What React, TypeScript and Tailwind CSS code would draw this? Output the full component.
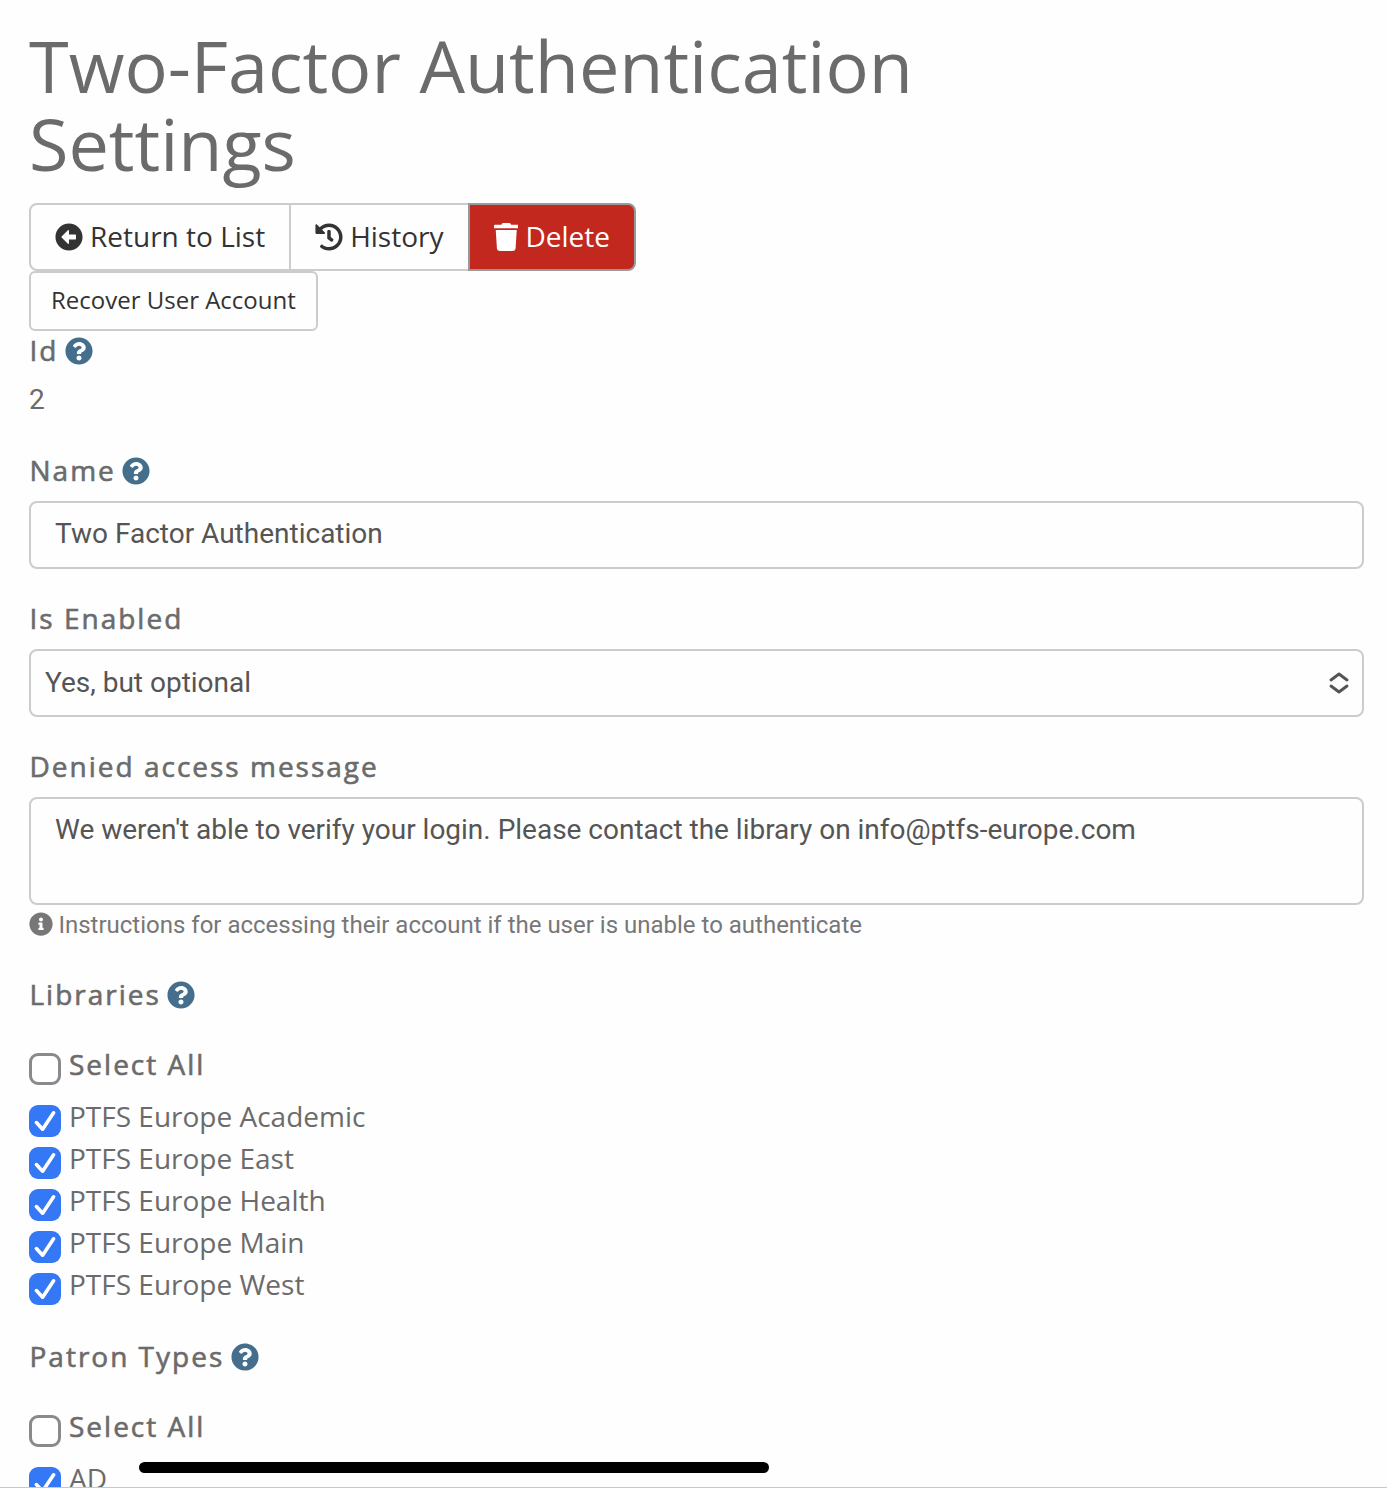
import type { ReactNode } from "react";
import {
  FaArrowAltCircleLeft,
  FaHistory,
  FaInfoCircle,
  FaQuestionCircle,
  FaTrash,
} from "react-icons/fa";

const libraries = [
  "PTFS Europe Academic",
  "PTFS Europe East",
  "PTFS Europe Health",
  "PTFS Europe Main",
  "PTFS Europe West",
];

function Label({ children, help = false, className = "" }: { children: ReactNode; help?: boolean; className?: string }) {
  return (
    <div className={`flex h-[38px] items-center pl-[0.5px] leading-[38px] ${className}`}>
      <span className="tracking-[2px] [-webkit-text-stroke:0.6px_#6b6b6b]">{children}</span>
      {help && <FaQuestionCircle className="mt-[1.2px] ml-[6.4px] size-7 text-[#446e8c]" />}
    </div>
  );
}

function Check({ label, checked = false, strong = false }: { label: string; checked?: boolean; strong?: boolean }) {
  return (
    <div className="flex h-[42px] items-start gap-2">
      {checked ? (
        <span className="mt-2 flex size-8 shrink-0 items-center justify-center rounded-[9px] bg-[#3578f6]">
          <svg viewBox="0 0 32 32" className="size-8" fill="none" stroke="#fff" strokeWidth="3.6" strokeLinecap="round" strokeLinejoin="round">
            <path d="M7.4 17.6 13.6 24.2 24.6 7.8" />
          </svg>
        </span>
      ) : (
        <span className="mt-2 size-8 shrink-0 rounded-[9px] border-3 border-[#8a8a8e] bg-white" />
      )}
      <span className={strong ? "leading-[38px] tracking-[2px] [-webkit-text-stroke:0.6px_#6b6b6b]" : "leading-[38px]"}>
        {label}
      </span>
    </div>
  );
}

export default function App() {
  return (
    <div className="relative flex h-[1488px] flex-col overflow-hidden bg-[#fefefe] pr-[23px] pl-[29px] font-['Open_Sans',sans-serif] text-[28px] text-[#6b6b6b] *:shrink-0">
      <h1 className="w-[1000px] pt-[26px] text-[72px] leading-[78px] tracking-[-0.02px]">Two-Factor Authentication Settings</h1>

      <div className="mt-[21px] flex h-[68px] text-[#333]">
        <button className="flex items-center gap-[7px] rounded-l-[8px] border-2 border-[#ccc] px-6 pb-0.5 leading-[38px]">
          <FaArrowAltCircleLeft className="mt-[1.2px]" />
          Return to List
        </button>
        <button className="-ml-0.5 flex items-center gap-[7px] border-2 border-[#ccc] px-6 pb-0.5 leading-[38px]">
          <FaHistory className="mt-[1.2px]" />
          History
        </button>
        <button className="-ml-0.5 flex items-center gap-[7.4px] rounded-r-[8px] border-2 border-[#999] bg-[#c3281e] px-6 pb-0.5 leading-[38px] text-white">
          <FaTrash className="mt-[1.2px] w-[24.5px]" />
          Delete
        </button>
      </div>
      <button className="h-[60px] self-start rounded-[6px] border-2 border-[#ccc] px-5 pb-0.5 text-[24px] text-[#333]">
        Recover User Account
      </button>

      <Label help>Id</Label>
      <div className="mt-[10px] h-[42px] font-['Roboto'] leading-[42px]">2</div>

      <Label help className="mt-[30px]">Name</Label>
      <input
        readOnly
        value="Two Factor Authentication"
        className="mt-3 h-[68px] w-full rounded-[8px] border-2 border-[#ccc] px-6 pb-[3px] font-['Roboto'] text-[#555] outline-none"
      />

      <Label className="mt-[30px]">Is Enabled</Label>
      <div className="mt-3 flex h-[68px] items-center justify-between rounded-[8px] border-2 border-[#ccc] pr-[13px] pl-3.5 font-['Roboto'] text-[#555]">
        <span className="pb-px">Yes, but optional</span>
        <svg viewBox="0 0 20 24" className="h-6 w-5" fill="none" stroke="#555" strokeWidth="2.9" strokeLinecap="round" strokeLinejoin="round">
          <path d="M2 9 10 3l8 6M2 15l8 6 8-6" />
        </svg>
      </div>

      <Label className="mt-[30px]">Denied access message</Label>
      <textarea
        readOnly
        value="We weren't able to verify your login. Please contact the library on info@ptfs-europe.com"
        className="mt-3 block h-[108px] w-full resize-none rounded-[8px] border-2 border-[#ccc] px-6 pt-[10px] font-['Roboto'] leading-[42px] tracking-[-0.01px] text-[#555] outline-none"
      />
      <div className="mt-0.5 flex h-9 items-center gap-[5.4px] font-['Roboto'] text-[24px] leading-9 text-[#777]">
        <FaInfoCircle className="mb-0.5" />
        Instructions for accessing their account if the user is unable to authenticate
      </div>

      <Label help className="mt-8">Libraries</Label>
      <div className="mt-8 flex flex-col">
        <Check label="Select All" strong />
        <div className="mt-2.5">
          {libraries.map((name) => (
            <Check key={name} label={name} checked />
          ))}
        </div>
      </div>

      <Label help className="mt-[30px]">Patron Types</Label>
      <div className="mt-8 flex flex-col">
        <Check label="Select All" strong />
        <div className="mt-2.5">
          <Check label="AD" checked />
        </div>
      </div>

      <div className="absolute top-[1462px] left-[139px] h-[11px] w-[630px] rounded-full bg-black" />
      <div className="absolute inset-x-0 bottom-0 h-px bg-[#c8c8c8]" />
    </div>
  );
}
